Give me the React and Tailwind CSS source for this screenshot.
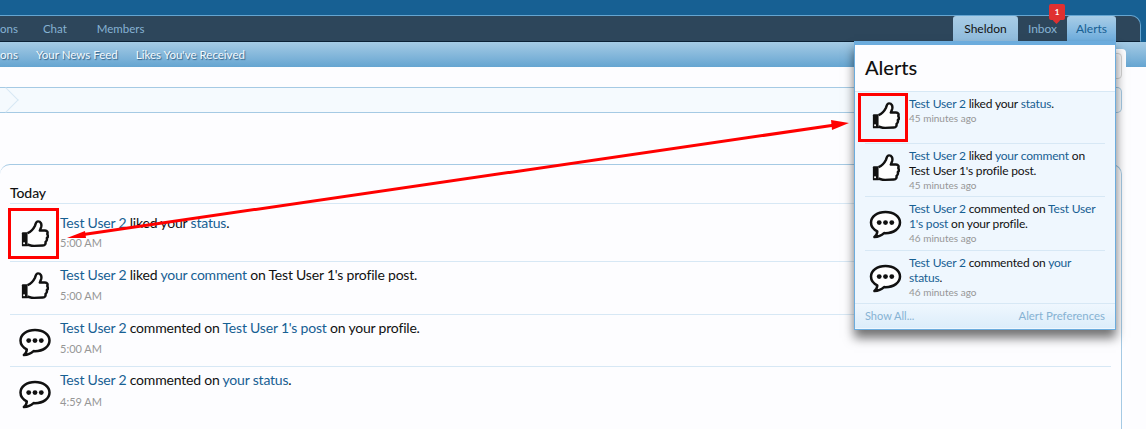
import React from 'react'

const Thumb = ({ className }) => (
  <svg viewBox="0 0 32 34" className={className}>
    <rect x="1" y="14.5" width="7" height="16" rx="1" fill="#111" />
    <path
      d="M7.5 15.5 C11 14 14 11 16 7 C17 4 17 2 19.5 2 C22.5 2 24 5 23 8.5 L21.5 12.5 L27.5 12.5 C30 12.5 31 14.5 30 16.5 C31 18 31 20 29.5 21 C30 23 29.5 24.5 28 25.5 C28.5 27.5 27.5 29.5 25 29.5 L15 30 C11.5 30 9.5 29 7.5 28.5"
      fill="#fff"
      stroke="#111"
      strokeWidth="2.8"
      strokeLinejoin="round"
    />
    <rect x="2.5" y="26" width="2" height="2" fill="#fff" />
  </svg>
)

const Bubble = ({ className }) => (
  <svg viewBox="0 0 34 30" className={className}>
    <path
      d="M17 2 C8.5 2 2 6.8 2 13 C2 17 4.6 20.2 8.5 22 C8.5 24.5 7.5 26.5 5.5 28 C9.5 27.8 13 26.2 15.5 23.9 L17 24 C25.5 24 32 19.2 32 13 C32 6.8 25.5 2 17 2 Z"
      fill="#fff"
      stroke="#111"
      strokeWidth="2.6"
      strokeLinejoin="round"
    />
    <circle cx="10.5" cy="13" r="2.5" fill="#111" />
    <circle cx="17" cy="13" r="2.5" fill="#111" />
    <circle cx="23.5" cy="13" r="2.5" fill="#111" />
  </svg>
)

const Name = ({ children }) => <span className="text-[#176093]">{children}</span>

const feed = [
  { icon: 'thumb', h: 'h-[58px]', pt: 'pt-[9px]', gap: 'mt-[4px]', iconPt: 'pt-[15px]', time: '5:00 AM', text: <><Name>Test User 2</Name> liked your <Name>status</Name>.</> },
  { icon: 'thumb', h: 'h-[53px]', pt: 'pt-[3px]', gap: 'mt-[5px]', iconPt: 'pt-[9px]', time: '5:00 AM', text: <><Name>Test User 2</Name> liked <Name>your comment</Name> on Test User 1's profile post.</> },
  { icon: 'bubble', h: 'h-[52px]', pt: 'pt-[3px]', gap: 'mt-[5px]', iconPt: 'pt-[13px]', time: '5:00 AM', text: <><Name>Test User 2</Name> commented on <Name>Test User 1's post</Name> on your profile.</> },
  { icon: 'bubble', h: 'h-[53px]', pt: 'pt-[3px]', gap: 'mt-[6px]', iconPt: 'pt-[13px]', time: '4:59 AM', text: <><Name>Test User 2</Name> commented on <Name>your status</Name>.</> },
]

const popup = [
  { icon: 'thumb', h: 'h-[52px]', iconPt: 'pt-[9px]', time: '45 minutes ago', text: <><Name>Test User 2</Name> liked your <Name>status</Name>.</> },
  { icon: 'thumb', h: 'h-[53px]', iconPt: 'pt-[9px]', time: '45 minutes ago', text: <><Name>Test User 2</Name> liked <Name>your comment</Name> on Test User 1's profile post.</> },
  { icon: 'bubble', h: 'h-[54px]', iconPt: 'pt-[13px]', time: '46 minutes ago', text: <><Name>Test User 2</Name> commented on <Name>Test User 1's post</Name> on your profile.</> },
  { icon: 'bubble', h: 'h-[52px]', iconPt: 'pt-[13px]', time: '46 minutes ago', text: <><Name>Test User 2</Name> commented on <Name>your status</Name>.</> },
]

const App = () => {
  return (
    <div className="relative w-[1146px] h-[429px] overflow-hidden bg-[#fdfdff] font-['Lato',sans-serif] text-[11.5px] text-[#111]">
      {/* header */}
      <div className="h-[15px] bg-[#176093]" />
      <div className="bg-[#176093]">
        <div className="flex items-center h-[27px] mr-[5px] bg-[#2d465b] border-t border-r border-b border-t-[#65a5d1] border-r-[#65a5d1] border-b-[#0b2236] rounded-tr-[10px] text-[#86b2d3]">
          <span>ons</span>
          <span className="ml-[25px]">Chat</span>
          <span className="ml-[30px]">Members</span>
          <div className="ml-auto flex h-full items-end text-[12px]">
            <span className="w-[65px] h-[25px] flex items-center justify-center bg-gradient-to-b from-[#a9cde6] to-[#8fbbdc] text-[#111] rounded-t-[3px]">Sheldon</span>
            <span className="relative w-[49px] h-[25px] flex items-center justify-center">
              Inbox
              <span className="absolute right-[2px] top-[-12px] w-[16px] h-[16px] flex items-center justify-center rounded-[2px] bg-[#e03030] text-white text-[8px] font-bold">1</span>
              <span className="absolute right-[8px] top-[2px] w-[5px] h-[5px] rotate-45 bg-[#e03030]" />
            </span>
            <span className="w-[49px] h-[25px] mr-[24px] flex items-center justify-center bg-gradient-to-b from-[#a9cde6] to-[#6cacdd] text-[#176093] rounded-t-[3px]">Alerts</span>
          </div>
        </div>
      </div>
      <div className="relative flex items-center h-[25px] bg-gradient-to-b from-[#a5cbe5] to-[#65a5d1] text-[#f4f9fd] gap-[18px] [text-shadow:1px_1px_1px_#2d5f85]">
        <span>ons</span>
        <span>Your News Feed</span>
        <span>Likes You've Received</span>
        <div className="absolute right-[20px] bottom-0 w-[20px] h-[18px] bg-[#fdfdff] rounded-t-[4px]" />
      </div>
      <div className="absolute right-[24px] top-[53px] w-[12px] h-[26px] border border-[#d5d5d5] rounded-r-[4px] bg-[#fdfdff]" />

      {/* breadcrumb */}
      <div className="relative mt-[20px] h-[26px] mr-[24px] bg-[#f5fafe] border-y border-r border-[#a5cae4] rounded-r-[5px]">
        <div className="absolute left-[-3px] top-[3px] w-[18px] h-[18px] rotate-45 border-t border-r border-[#d7e8f5]" />
      </div>

      {/* alerts page */}
      <div className="mt-[51px] mr-[24px] h-[300px] px-[10px] pt-[20px] border-t border-r border-[#a5cae4] rounded-t-[10px]">
        <h3 className="h-[18px] leading-[16px] text-[14px] font-medium tracking-[-0.1px]">Today</h3>
        <ul>
          {feed.map((item, i) => (
            <li key={i} className={`flex border-t border-[#d7e8f5] ${item.h}`}>
              <div className={`w-[50px] flex justify-center ${item.iconPt}`}>
                {item.icon === 'thumb' ? <Thumb className="w-[28px] h-[31px]" /> : <Bubble className="w-[34px] h-[29px]" />}
              </div>
              <div className={item.pt}>
                <p className="text-[14px] leading-[19px] tracking-[-0.2px]">{item.text}</p>
                <p className={`text-[11px] leading-[14px] text-[#969696] ${item.gap}`}>{item.time}</p>
              </div>
            </li>
          ))}
        </ul>
      </div>

      {/* alerts popup */}
      <div className="absolute left-[854px] top-[41px] w-[262px] h-[289px] border border-[#6cacdd] border-t-[4px] bg-[#eff7fe] shadow-[0_8px_10px_rgba(0,0,0,0.55)]">
        <div className="h-[47px] bg-[#fdfdff] pl-[10px] pt-[9px] border-b border-[#d7e8f5] text-[20px] leading-[27px] font-medium">Alerts</div>
        <ul className="px-[10px]">
          {popup.map((item, i) => (
            <li key={i} className={`flex ${item.h} ${i < 3 ? 'border-b border-[#d7e8f5]' : ''}`}>
              <div className={`w-[44px] shrink-0 ${item.iconPt} ${item.icon === 'thumb' ? 'pl-[7px]' : 'pl-[4px]'}`}>
                {item.icon === 'thumb' ? <Thumb className="w-[28px] h-[31px]" /> : <Bubble className="w-[33px] h-[29px]" />}
              </div>
              <div className="pt-[4px]">
                <p className="text-[12px] leading-[15px] tracking-[-0.18px]">{item.text}</p>
                <p className="text-[10px] leading-[14px] text-[#969696]">{item.time}</p>
              </div>
            </li>
          ))}
        </ul>
        <div className="flex justify-between items-center h-[25px] px-[10px] border-t border-[#d7e8f5] bg-gradient-to-b from-[#eff7fe] to-[#dcedfa] text-[11px] text-[#86b2d3]">
          <span>Show All...</span>
          <span className="text-[11.4px]">Alert Preferences</span>
        </div>
      </div>

      {/* annotations */}
      <div className="absolute left-[8px] top-[208px] w-[51px] h-[51px] border-[3px] border-[#ff0000]" />
      <div className="absolute left-[858px] top-[93px] w-[50px] h-[49px] border-[3px] border-[#ff0000]" />
      <svg className="absolute left-0 top-0 w-[1146px] h-[429px] pointer-events-none" viewBox="0 0 1146 429">
        <line x1="80" y1="235" x2="835" y2="125" stroke="#ff0000" strokeWidth="3" />
        <polygon points="67,238 85,231 86,238" fill="#ff0000" />
        <polygon points="849,123 831,120 832,130" fill="#ff0000" />
      </svg>
    </div>
  )
}

export default App
